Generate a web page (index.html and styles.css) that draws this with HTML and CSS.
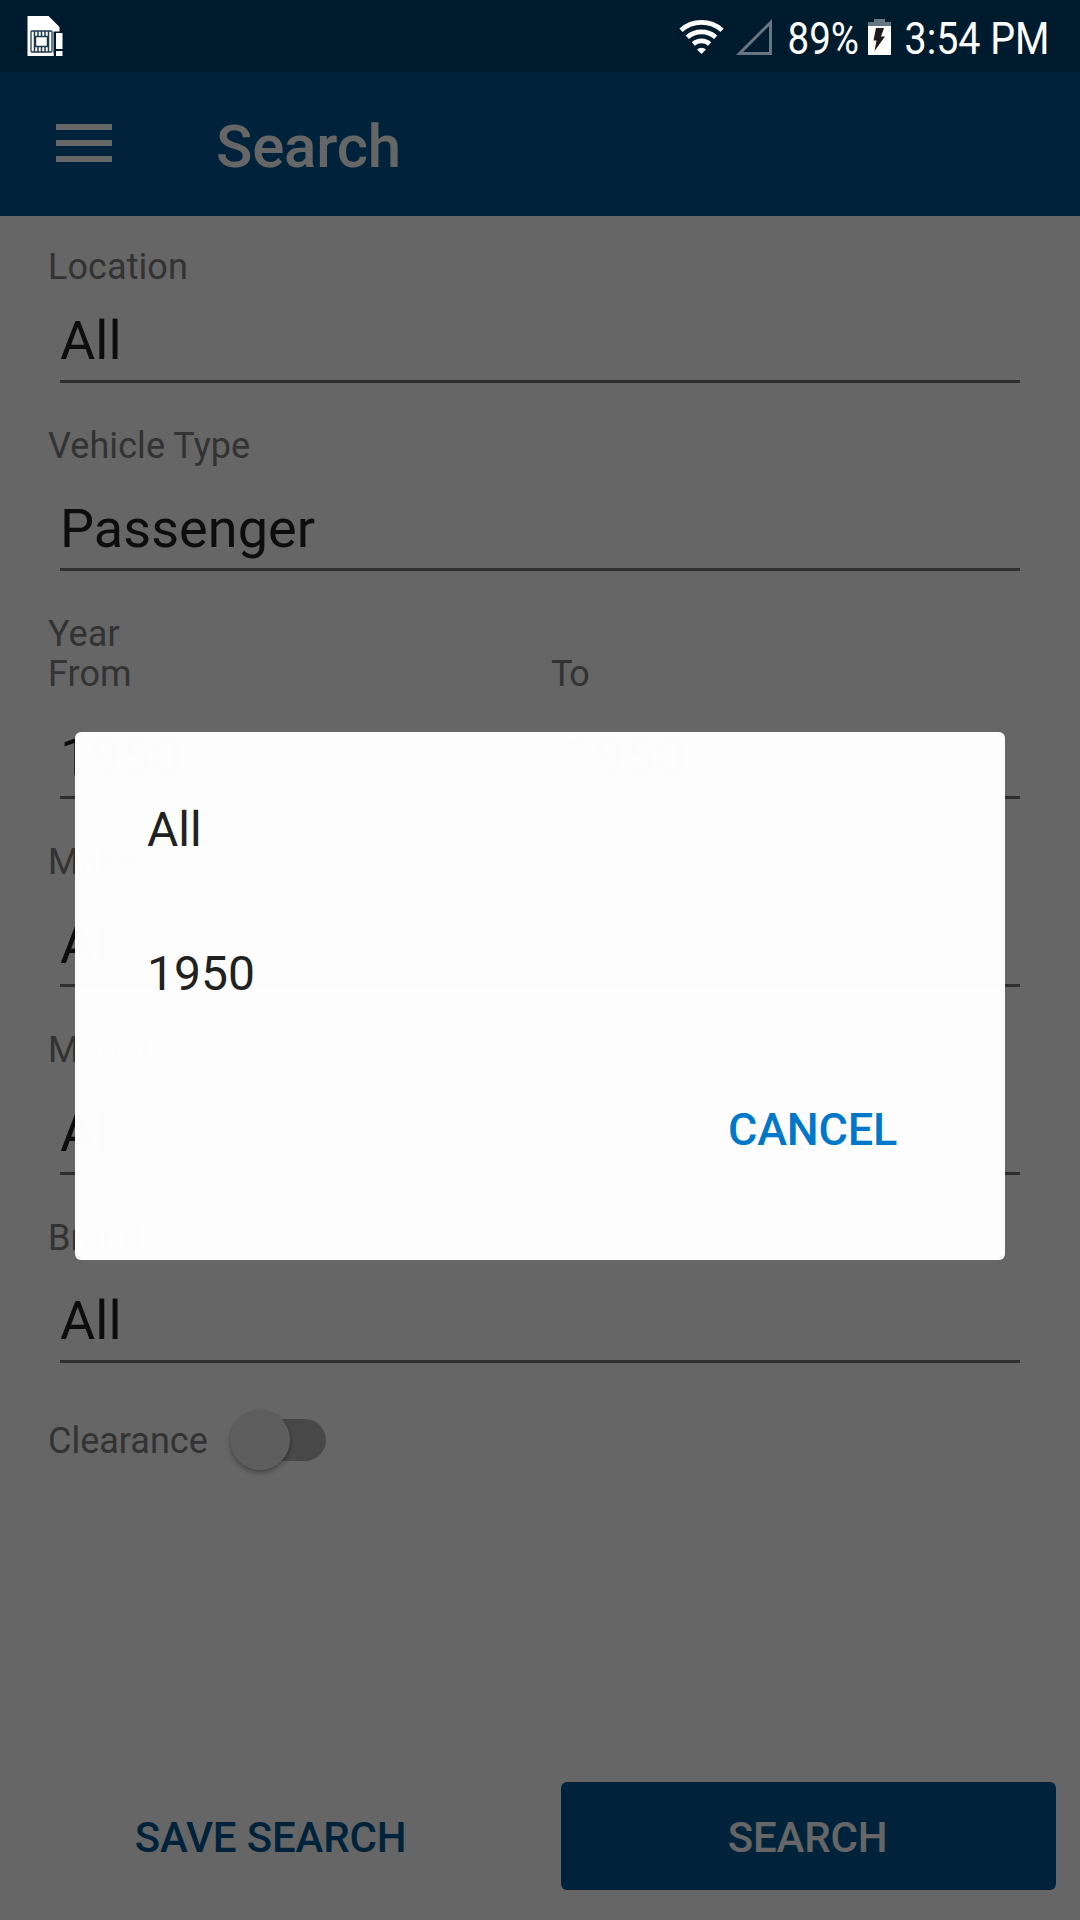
FILE: index.html
```html
<!DOCTYPE html>
<html lang="en">
<head>
<meta charset="utf-8">
<title>Search</title>
<link rel="stylesheet" href="styles.css">
</head>
<body>
<div class="screen">
  <header class="statusbar">
    <svg class="sim" width="38" height="44" viewBox="0.500 0 38 44">
      <path d="M1 1H22L33 12V41H1Z" fill="#fff"/>
      <rect x="4.500" y="16" width="21" height="21" rx="1" fill="#fff" stroke="#1c3a50" stroke-width="1.300"/>
      <path d="M8 16V37M22 16V37M11.500 16V21M15 16V21M18.500 16V21M11.500 32V37M15 32V37M18.500 32V37" stroke="#1c3a50" stroke-width="1.500"/>
      <rect x="9" y="21.500" width="12" height="10" fill="#fff" stroke="#1c3a50" stroke-width="1.500"/>
      <path d="M27 16.500H38V43H27Z" fill="#001b2d"/>
      <path d="M29.500 18H36V34H29.500ZM29.500 36H36V41H29.500Z" fill="#fff"/>
      <path d="M26.500 38V41" stroke="#fff" stroke-width="1"/>
    </svg>
    <svg class="indicators" width="400" height="72" viewBox="680 0 400 72">
      <g fill="none" stroke="#fff" stroke-width="4.800">
        <path d="M681 30.200A31 31 0 0 1 722 30.200"/>
        <path d="M687.300 37.200A21.500 21.500 0 0 1 715.700 37.200"/>
        <path d="M693.300 44A12.500 12.500 0 0 1 709.700 44"/>
      </g>
      <path d="M701.500 54L697 49.500A6.500 6.500 0 0 1 706 49.500Z" fill="#fff"/>
      <path d="M739.500 53.500H770.500V22.500Z" fill="none" stroke="#667682" stroke-width="3"/>
      <text x="787.500" y="54" textLength="71.500" lengthAdjust="spacingAndGlyphs">89%</text>
      <path d="M868 26V22H874V19H885V22H891V26Z" fill="#667682"/>
      <path d="M868 26H891V55H868Z" fill="#fff"/>
      <path d="M876 28H884L881 36.500H885L874.500 51L876.500 40.500H873.500Z" fill="#1b1b1b"/>
      <text x="904.500" y="54" textLength="145" lengthAdjust="spacingAndGlyphs">3:54 PM</text>
    </svg>
  </header>

  <div class="appbar">
    <svg width="56" height="38" viewBox="0 0 56 38" fill="#fff"><path d="M0 0H56V6H0ZM0 16H56V22H0ZM0 32H56V38H0Z"/></svg>
    <h1 class="title">Search</h1>
  </div>

  <main class="form">
    <div class="field field-tight"><span class="label">Location</span><span class="value">All</span></div>
    <div class="field"><span class="label">Vehicle Type</span><span class="value">Passenger</span></div>
    <div class="range">
      <span class="label">Year</span>
      <div class="range-columns">
        <div class="field"><span class="label">From</span><span class="value value-from">1950</span></div>
        <div class="field"><span class="label label-to">To</span><span class="value">1950</span></div>
      </div>
    </div>
    <div class="field"><span class="label">Make</span><span class="value">All</span></div>
    <div class="field"><span class="label">Model</span><span class="value">All</span></div>
    <div class="field"><span class="label">Brand</span><span class="value">All</span></div>
    <div class="clearance"><span class="label">Clearance</span><span class="switch"><span class="thumb"></span></span></div>
  </main>

  <footer class="actions">
    <button class="button">SAVE SEARCH</button>
    <button class="button button-primary">SEARCH</button>
  </footer>

  <div class="scrim">
    <div class="dialog">
      <div class="option">All</div>
      <div class="option">1950</div>
      <div class="dialog-actions"><button class="cancel">CANCEL</button></div>
    </div>
  </div>
</div>
</body>
</html>
```
FILE: styles.css
```css
* { box-sizing: border-box; }
body { margin: 0; font-family: Roboto, "Liberation Sans", sans-serif; }
button { border: 0; padding: 0; margin: 0; background: none; font: inherit; }
svg { display: block; flex: none; }

.screen {
  position: relative;
  width: 1080px;
  height: 1920px;
  overflow: hidden;
  display: flex;
  flex-direction: column;
  background: #fff;
}

.statusbar {
  position: relative;
  z-index: 2;
  height: 72px;
  flex: none;
  display: flex;
  justify-content: space-between;
  padding-left: 27px;
  background: #001b2d;
}
.sim { margin-top: 15px; }
.indicators { overflow: visible; font-size: 45px; fill: #fff; }

.appbar {
  height: 144px;
  flex: none;
  display: flex;
  align-items: center;
  gap: 104px;
  padding: 0 56px;
  background: #005896;
}
.appbar svg { margin-bottom: 2px; }
.title { margin: 6px 0 0; font-size: 60px; line-height: 70px; font-weight: 500; letter-spacing: -.2px; color: #fff; }

.form {
  flex: 1;
  display: flex;
  flex-direction: column;
  gap: 43px;
  padding: 31px 48px 0;
}
.label { font-size: 36px; line-height: 40px; letter-spacing: .08px; color: #808080; }
.label-to { margin-left: -1px; letter-spacing: -1.500px; }
.field { display: flex; flex-direction: column; gap: 31px; }
.field-tight { gap: 22px; }
.value {
  height: 74px;
  margin: 0 12px;
  border-bottom: 3px solid #757575;
  font-size: 54px;
  line-height: 63px;
  letter-spacing: .05px;
  color: #212121;
}
.range { display: flex; flex-direction: column; }
.range-columns { display: grid; grid-template-columns: 504px 480px; }
.value-from { margin-right: 24px; }

.clearance { display: flex; align-items: center; gap: 22.500px; height: 66px; margin-top: 1px; }
.clearance .label { padding-top: 2px; letter-spacing: 0; }
.switch {
  width: 96px;
  height: 42px;
  border-radius: 21px;
  display: flex;
  align-items: center;
  background: linear-gradient(to right, transparent 30px, #b4b4b4 30px);
}
.thumb {
  width: 60px;
  height: 60px;
  flex: none;
  border-radius: 50%;
  background: #ececec;
  box-shadow: 0 3px 5px rgba(0, 0, 0, .3), 0 0 2px rgba(0, 0, 0, .12);
}

.actions {
  display: grid;
  grid-template-columns: 495px 495px;
  gap: 42px;
  padding: 0 24px 30px;
}
.button { height: 108px; padding: 2px 2px 0 0; border-radius: 6px; font-size: 42px; font-weight: 500; letter-spacing: -.16px; color: #005896; }
.button-primary { background: #005896; color: #fff; }

.scrim {
  position: absolute;
  inset: 0;
  z-index: 1;
  padding: 732px 75px 0;
  background: rgba(0, 0, 0, .6);
}
.dialog {
  height: 528px;
  padding: 24px 72px 0;
  border-radius: 6px;
  background: rgba(255, 255, 255, .987);
}
.option { height: 144px; font-size: 48px; line-height: 148px; color: #212121; }
.dialog-actions { display: flex; justify-content: flex-end; padding: 13px 36px 0 0; }
.cancel { height: 144px; font-size: 45px; font-weight: 500; letter-spacing: -.2px; color: #0077c8; }
```
